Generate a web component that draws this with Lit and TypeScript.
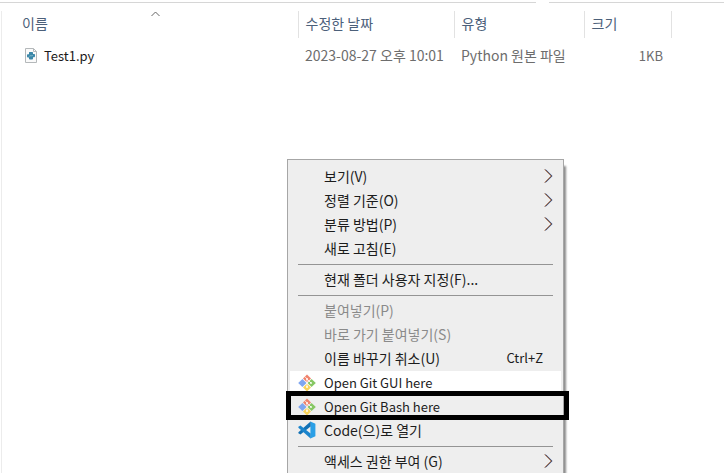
import { LitElement, html, css, svg, nothing } from "lit";
import { customElement } from "lit/decorators.js";
import { classMap } from "lit/directives/class-map.js";

type Entry =
  | "separator"
  | {
      label: string;
      icon?: "git" | "code";
      shortcut?: string;
      submenu?: boolean;
      disabled?: boolean;
      hover?: boolean;
      marked?: boolean;
    };

const ENTRIES: Entry[] = [
  { label: "보기(V)", submenu: true },
  { label: "정렬 기준(O)", submenu: true },
  { label: "분류 방법(P)", submenu: true },
  { label: "새로 고침(E)" },
  "separator",
  { label: "현재 폴더 사용자 지정(F)..." },
  "separator",
  { label: "붙여넣기(P)", disabled: true },
  { label: "바로 가기 붙여넣기(S)", disabled: true },
  { label: "이름 바꾸기 취소(U)", shortcut: "Ctrl+Z" },
  { label: "Open Git GUI here", icon: "git", hover: true },
  { label: "Open Git Bash here", icon: "git", marked: true },
  { label: "Code(으)로 열기", icon: "code" },
  "separator",
  { label: "액세스 권한 부여 (G)", submenu: true },
];

const gitIcon = html`<svg width="18" height="18" viewBox="0 0 18 18" aria-hidden="true">
  ${svg`
    <path d="M9 0.4 13 4.4 9 8.6 5 4.4Z" fill="#f0836c"/>
    <path d="M4.4 5 8.5 9 4.4 13 0.2 9Z" fill="#7fa6f0"/>
    <path d="M13.6 5 17.8 9 13.6 13 9.5 9Z" fill="#86c763"/>
    <path d="M9 9.4 13 13.6 9 17.6 5 13.6Z" fill="#f8d35a"/>
    <path d="M6.8 2.6 9 4.8V13M9.4 5.4 13 9" fill="none" stroke="#fff" stroke-width="0.8"/>
    <circle cx="9" cy="5" r="0.9" fill="#fff"/>
    <circle cx="9" cy="13" r="0.9" fill="#fff"/>
    <circle cx="13" cy="9" r="0.9" fill="#fff"/>`}
</svg>`;

const codeIcon = html`<svg width="18" height="18" viewBox="0 0 18 18" aria-hidden="true">
  ${svg`
    <path d="M12.4 0.6 17.4 2.8V15.2L12.4 17.4Z" fill="#2a9fe6"/>
    <path d="M12.6 0.6V5.6L2.4 13.6 0.4 12.2V11.2Z" fill="#1272b6"/>
    <path d="M12.6 17.4V12.4L2.4 4.4 0.4 5.8V6.8Z" fill="#1b84cc"/>`}
</svg>`;

const pythonFileIcon = html`<svg width="12" height="15" viewBox="0 0 12 15" aria-hidden="true">
  ${svg`
    <path d="M0.5 0.5H8.5L11.5 3.5V14.5H0.5Z" fill="#fafafa" stroke="#b4b8ba"/>
    <path d="M8.5 0.5V3.5H11.5" fill="none" stroke="#b4b8ba"/>
    <path d="M4.4 4H7.4L8 4.6V6H9.4L10 6.6V8.6L9.4 9.2H8V10.8L7.4 11.4H4.6L4 10.8V9.4H2.6L2 8.8V6.8L2.6 6.2H4V4.4Z" fill="#3b87a8"/>
    <path d="M4.2 8.6 4.8 7.8H7.2L8 7" fill="none" stroke="#a9d0de" stroke-width="0.6"/>`}
</svg>`;

const arrow = html`<svg class="arrow" width="9" height="14" viewBox="0 0 9 14" aria-hidden="true">
  ${svg`
    <path d="M0.6 0.5 7.1 7 0.6 13.5" fill="none" stroke="#e0a070" stroke-width="1"/>
    <path d="M1.8 0.5 8.3 7 1.8 13.5" fill="none" stroke="#7fa8e0" stroke-width="1"/>
    <path d="M1.2 0.5 7.7 7 1.2 13.5" fill="none" stroke="#40303c" stroke-width="1"/>`}
</svg>`;

@customElement("context-menu")
export class ContextMenu extends LitElement {
  static styles = css`
    :host {
      display: block;
      box-sizing: border-box;
      padding: 5px 2px 4px;
      background: #eeeeee;
      border: 1px solid #a6a6a6;
      box-shadow: 3px 6px 2px -1px #8c8c8c;
    }
    .separator {
      height: 1px;
      margin: 3px 8px;
      border: 0;
      background: #949494;
    }
    .item {
      position: relative;
      display: grid;
      grid-template-columns: 18px 1fr auto;
      column-gap: 8px;
      align-items: center;
      width: 100%;
      height: 24px;
      padding: 0 8px 2px;
      border: 0;
      background: none;
      color: #1c1c1c;
      font: inherit;
      line-height: 22px;
      text-align: left;
      white-space: nowrap;
    }
    .latin {
      padding-bottom: 0;
      font-size: 13px;
    }
    .item:disabled {
      color: #8a8a8a;
    }
    .hover {
      background: #ffffff;
    }
    .marked::after {
      content: "";
      position: absolute;
      inset: -4px -8px -1px -4px;
      border: 5px solid #000000;
      z-index: 1;
    }
    .icon {
      display: flex;
    }
    .arrow {
      display: block;
    }
    .shortcut {
      padding-right: 10px;
      font-size: 13px;
    }
  `;

  render() {
    return ENTRIES.map((e) =>
      e === "separator"
        ? html`<hr class="separator" />`
        : html`<button
            type="button"
            role="menuitem"
            class=${classMap({
              item: true,
              latin: e.icon === "git",
              hover: !!e.hover,
              marked: !!e.marked,
            })}
            ?disabled=${!!e.disabled}
          >
            <span class="icon">${e.icon === "git" ? gitIcon : e.icon === "code" ? codeIcon : nothing}</span>
            <span>${e.label}</span>
            ${e.submenu ? arrow : e.shortcut ? html`<span class="shortcut">${e.shortcut}</span>` : nothing}
          </button>`
    );
  }
}

@customElement("app-root")
export class AppRoot extends LitElement {
  static styles = css`
    :host {
      display: block;
      position: relative;
      box-sizing: border-box;
      height: 100vh;
      overflow: hidden;
      padding-top: 2px;
      background: #ffffff;
      font: 14px "Noto Sans CJK KR", sans-serif;
    }
    .edge {
      display: grid;
      grid-template-columns: 536fr 175fr;
      column-gap: 13px;
    }
    .edge span {
      height: 1px;
      background: #d6d6d6;
    }
    .files {
      min-height: 100vh;
      margin: 8px 0 0 1px;
      border-left: 1px solid #ececec;
    }
    table {
      width: 100%;
      table-layout: fixed;
      border-collapse: collapse;
    }
    .name {
      width: 296px;
    }
    .date {
      width: 156px;
    }
    .type {
      width: 130px;
    }
    .size {
      width: 87px;
    }
    th,
    td {
      padding: 0;
      text-align: left;
      font-weight: 400;
      white-space: nowrap;
    }
    th {
      box-sizing: border-box;
      height: 27px;
      border-right: 1px solid #e2e2e2;
    }
    th:last-child {
      border-right: 0;
    }
    .sort {
      position: relative;
      display: block;
      width: 100%;
      height: 27px;
      padding: 0 0 3px 7px;
      border: 0;
      background: none;
      color: #4c607a;
      font: inherit;
      line-height: 24px;
      text-align: left;
    }
    .first {
      padding-left: 20px;
    }
    .caret {
      position: absolute;
      top: 0;
      left: 50%;
    }
    td {
      height: 34px;
      padding-left: 7px;
      color: #6d6d6d;
    }
    td.file {
      padding-left: 23px;
      color: #1a1a1a;
      font-size: 13px;
    }
    .file-label {
      display: flex;
      align-items: center;
      gap: 7px;
    }
    td.amount {
      padding-right: 8px;
      text-align: right;
      font-size: 13px;
    }
    .menu {
      position: absolute;
      top: 159px;
      left: 287px;
      width: 277px;
    }
  `;

  render() {
    return html`
      <div class="edge"><span></span><span></span></div>
      <div class="files">
        <table>
          <colgroup>
            <col class="name" />
            <col class="date" />
            <col class="type" />
            <col class="size" />
            <col />
          </colgroup>
          <thead>
            <tr>
              <th scope="col" aria-sort="ascending">
                <button type="button" class="sort first">
                  이름
                  <svg class="caret" width="11" height="6" viewBox="0 0 11 6" aria-hidden="true">
                    <path d="M1.5 5 5.5 1 9.5 5" fill="none" stroke="#666" stroke-width="1" />
                  </svg>
                </button>
              </th>
              <th scope="col"><button type="button" class="sort">수정한 날짜</button></th>
              <th scope="col"><button type="button" class="sort">유형</button></th>
              <th scope="col"><button type="button" class="sort">크기</button></th>
              <th></th>
            </tr>
          </thead>
          <tbody>
            <tr>
              <td class="file"><span class="file-label">${pythonFileIcon}Test1.py</span></td>
              <td>2023-08-27 오후 10:01</td>
              <td>Python 원본 파일</td>
              <td class="amount">1KB</td>
              <td></td>
            </tr>
          </tbody>
        </table>
      </div>
      <context-menu class="menu" role="menu"></context-menu>
    `;
  }
}
